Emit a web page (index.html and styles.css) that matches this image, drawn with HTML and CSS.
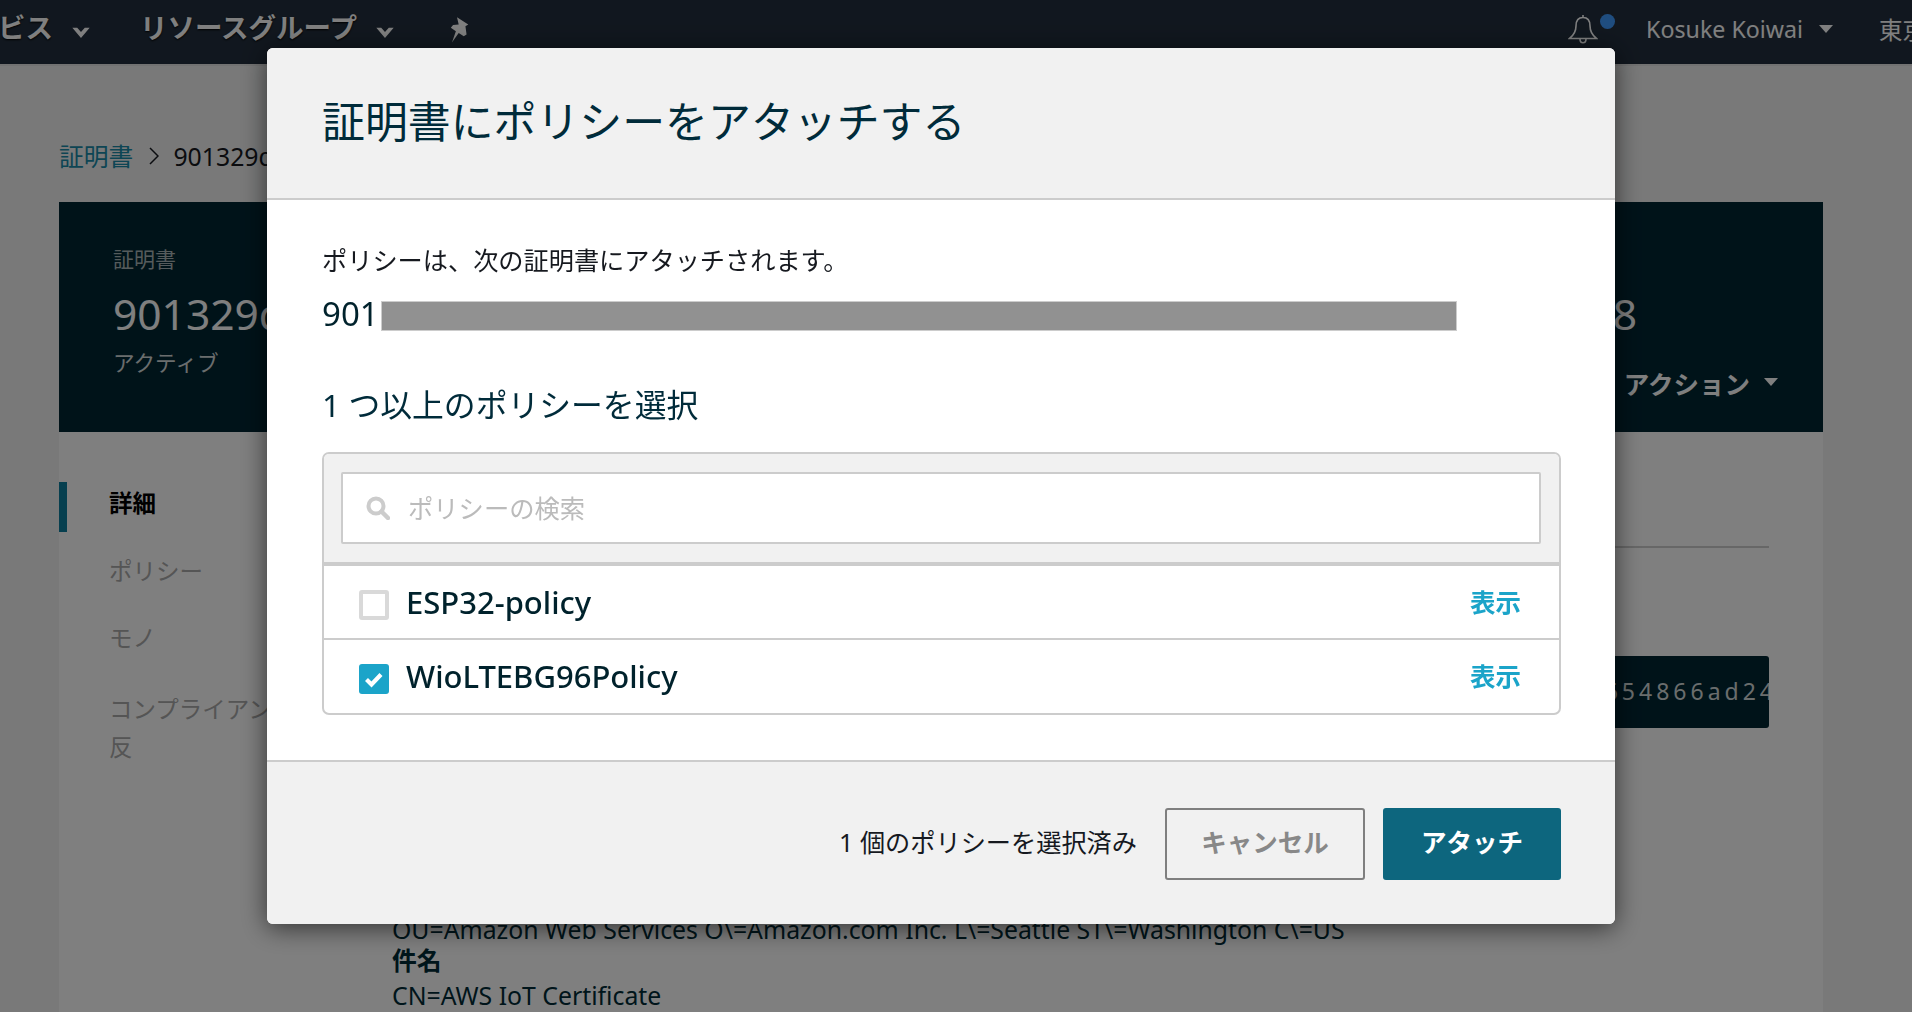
FILE: index.html
```html
<!DOCTYPE html>
<html lang="ja">
<head>
<meta charset="utf-8">
<title>証明書にポリシーをアタッチする</title>
<link rel="stylesheet" href="styles.css">
</head>
<body>
<div class="page">
  <header class="topbar">
    <span class="nav-item nav-first">ビス</span>
    <svg class="chev" viewBox="0 0 16 12"><path d="M0 1.500l8 9.500 8-9.500h-4.500L8 5.500 4.500 1.500z"/></svg>
    <span class="nav-item nav-second">リソースグループ</span>
    <svg class="chev" viewBox="0 0 16 12"><path d="M0 1.500l8 9.500 8-9.500h-4.500L8 5.500 4.500 1.500z"/></svg>
    <svg class="pin" viewBox="0 0 24 24"><path d="M8 1l10 6.500-2.500 1.500 1 7.500-2.500 1.500-4.500-3-6 8.500 3.500-10-4.500-3 2-2.500 5-.5z"/></svg>
    <span class="spacer"></span>
    <svg class="bell" viewBox="0 0 30 30"><path d="M15 1v2.500M15 3.500c-5 0-7 4-7 8.500 0 6-2 9-6.500 12.500h27C24 21 22 18 22 12c0-4.500-2-8.500-7-8.500zM12 25c0 5 6 5 6 0" fill="none" stroke="currentColor" stroke-width="1.600"/></svg>
    <span class="dot"></span>
    <span class="user">Kosuke Koiwai</span>
    <span class="caret"></span>
    <span class="region">東京</span>
  </header>
  <main class="main">
    <nav class="crumbs"><a class="crumb-link">証明書</a><svg class="crumb-sep" viewBox="0 0 10 18"><path d="M1 1l8 8-8 8" fill="none" stroke="currentColor" stroke-width="1.500"/></svg><span>901329d</span></nav>
    <section class="panel">
      <div class="hero">
        <div class="hero-main">
          <div class="hero-label">証明書</div>
          <div class="hero-id"><span>901329d</span><span>8</span></div>
          <div class="hero-status">アクティブ</div>
        </div>
        <div class="hero-action">アクション<span class="caret action-caret"></span></div>
      </div>
      <div class="panel-body">
        <ul class="side">
          <li class="side-item active">詳細</li>
          <li class="side-item">ポリシー</li>
          <li class="side-item">モノ</li>
          <li class="side-item side-wrap">コンプライアンス違反</li>
        </ul>
        <div class="content">
          <div class="rule"></div>
          <div class="hash"><span>654866ad24</span></div>
          <p class="info info-first">OU=Amazon Web Services O\=Amazon.com Inc. L\=Seattle ST\=Washington C\=US</p>
          <p class="info info-head">件名</p>
          <p class="info">CN=AWS IoT Certificate</p>
        </div>
      </div>
    </section>
  </main>
</div>
<div class="overlay"></div>
<div class="modal">
  <div class="modal-head"><h1 class="modal-title">証明書にポリシーをアタッチする</h1></div>
  <div class="modal-body">
    <p class="intro">ポリシーは、次の証明書にアタッチされます。</p>
    <div class="cert"><span class="cert-id">901</span><span class="redact"></span></div>
    <h2 class="pick">1 つ以上のポリシーを選択</h2>
    <div class="box">
      <div class="box-head">
        <div class="search">
          <svg class="search-icon" viewBox="0 0 24 24"><circle cx="10" cy="10" r="7.500" fill="none" stroke="currentColor" stroke-width="4"/><path d="M15.500 15.500L22 22" stroke="currentColor" stroke-width="4.500" stroke-linecap="round"/></svg>
          <span class="placeholder">ポリシーの検索</span>
        </div>
      </div>
      <div class="row row-line">
        <span class="check"></span>
        <span class="policy">ESP32-policy</span>
        <a class="show">表示</a>
      </div>
      <div class="row">
        <span class="check checked"><svg viewBox="0 0 30 30"><path d="M7.500 15.500l5 5 9.500-10" fill="none" stroke="#fff" stroke-width="4.200"/></svg></span>
        <span class="policy">WioLTEBG96Policy</span>
        <a class="show">表示</a>
      </div>
    </div>
  </div>
  <div class="modal-foot">
    <span class="count">1 個のポリシーを選択済み</span>
    <button class="btn btn-cancel">キャンセル</button>
    <button class="btn btn-attach">アタッチ</button>
  </div>
</div>
</body>
</html>
```
FILE: styles.css
```css
* { box-sizing: border-box; }
html, body { margin: 0; height: 1012px; overflow: hidden; }
body {
  font-family: "Noto Sans", "Noto Sans CJK JP", sans-serif;
  background: #f2f3f3;
  color: #16191f;
}
p, h1, h2, ul { margin: 0; padding: 0; font-weight: 400; }

.page { height: 1012px; overflow: hidden; display: flex; flex-direction: column; }

.topbar {
  flex: none;
  height: 66px;
  padding-bottom: 6px;
  border-bottom: 2px solid #e5e5e5;
  background: #232f3e;
  color: #fff;
  display: flex;
  align-items: center;
  white-space: nowrap;
  overflow: hidden;
}
.nav-item { font-size: 27.500px; font-weight: 700; text-shadow: 0 1px 2px #000; margin-top: -6px; }
.nav-first { margin-left: -2px; }
.nav-second { margin-left: 50px; }
.chev { width: 18px; height: 13px; fill: #fff; margin-left: 19px; margin-top: 6px; flex: none; }
.pin { width: 27px; height: 27px; fill: #fff; margin-left: 54px; flex: none; }
.spacer { flex: 1; }
.bell { width: 30px; height: 30px; margin-top: 0; flex: none; }
.dot { width: 15px; height: 15px; border-radius: 50%; background: #3f9bff; align-self: flex-start; margin-top: 14px; margin-left: 2px; flex: none; }
.user { font-size: 23.200px; margin-left: 31px; }
.caret { display: inline-block; width: 0; height: 0; border: 7px solid transparent; border-top: 8px solid #fff; border-bottom: 0; margin-left: 16px; }
.region { font-size: 23.500px; margin-left: 46px; margin-right: -14px; }

.main { flex: 1; padding: 0 89px 0 59px; min-height: 0; display: flex; flex-direction: column; }
.crumbs { height: 136px; flex: none; display: flex; align-items: center; font-size: 24.800px; padding-top: 90px; padding-bottom: 46px; line-height: 0; }
.crumb-link { color: #1a8ba8; }
.crumb-sep { width: 10px; height: 18px; margin: 0 14px 0 16px; }

.panel { flex: 1; background: #fff; display: flex; flex-direction: column; }
.hero { flex: none; height: 230px; background: #002633; color: #fff; display: flex; justify-content: space-between; padding: 0 45px 0 54px; position: relative; }
.hero-main { padding-top: 43px; width: 1524px; flex: none; }
.hero-label { font-size: 21px; line-height: 28px; color: #aab7b8; }
.hero-id { font-size: 42.500px; line-height: 58px; margin-top: 12px; white-space: nowrap; color: #fff; display: flex; justify-content: space-between; }
.hero-status { font-size: 21.600px; line-height: 28px; margin-top: 6px; color: #d5dbdb; }
.hero-action { position: absolute; right: 45px; top: 167px; font-size: 25.500px; line-height: 30px; font-weight: 700; color: #fff; white-space: nowrap; display: flex; align-items: center; }
.action-caret { margin-left: 14px; margin-top: -4px; }

.panel-body { flex: 1; display: flex; min-height: 0; }
.side { list-style: none; flex: none; width: 334px; padding-top: 50px; }
.side-item { font-size: 23.500px; line-height: 39px; padding-left: 50px; color: #aaa; margin-bottom: 28px; white-space: nowrap; }
.side-item.active { color: #000; font-weight: 700; border-left: 8px solid #0d7f9f; padding-left: 42px; height: 50px; line-height: 42px; margin-bottom: 20px; }
.side-wrap { width: 274px; white-space: normal; padding-top: 4px; line-height: 38px; }

.content { flex: 1; min-width: 0; padding-right: 54px; }
.rule { height: 2px; background: #cfcfcf; margin-top: 114px; }
.hash { height: 72px; margin-top: 108px; background: #002633; color: #d5dbdb; border-radius: 3px; display: flex; align-items: center; justify-content: flex-end; overflow: hidden; font-size: 23px; letter-spacing: 4px; white-space: nowrap; padding-bottom: 2px; }
.hash span { flex: none; margin-right: -8px; }
.info { font-size: 24.800px; line-height: 33px; color: #002b36; white-space: nowrap; margin-left: -1px; }
.info-first { margin-top: 185px; }
.info-head { font-weight: 700; margin-top: -2px; margin-bottom: 2px; }

.overlay { position: fixed; inset: 0; background: rgba(0, 0, 0, .5); }

.modal {
  position: fixed;
  left: 267px;
  top: 48px;
  width: 1348px;
  height: 876px;
  background: #fff;
  border-radius: 6px;
  box-shadow: 0 4px 26px rgba(0, 0, 0, .6);
  display: flex;
  flex-direction: column;
  overflow: hidden;
  color: #00222c;
}
.modal-head { flex: none; height: 152px; background: #f1f1f1; border-bottom: 2px solid #ccc; display: flex; align-items: center; padding: 0 55px 2px; }
.modal-title { font-size: 42.900px; line-height: 60px; color: #002b3a; }
.modal-body { flex: none; height: 560px; padding: 45px 54px 0 55px; }
.intro { font-size: 25.200px; line-height: 30px; color: #16191f; white-space: nowrap; }
.cert { display: flex; align-items: center; height: 30px; margin-top: 26px; gap: 2px; }
.cert-id { font-size: 33px; line-height: 30px; margin-top: -4px; }
.redact { width: 1076px; height: 30px; background: #919191; border: 1px solid #ccc; flex: none; }
.pick { font-size: 31.800px; line-height: 40px; margin-top: 54px; color: #002b3a; }
.box { margin-top: 27px; height: 263px; border: 2px solid #ccc; border-radius: 7px; overflow: hidden; }
.box-head { background: #f1f1f1; height: 112px; border-bottom: 4px solid #ccc; padding: 18px 18px 17px 17px; }
.search { height: 72px; background: #fff; border: 2px solid #ccc; border-radius: 2px; display: flex; align-items: center; padding-left: 23px; }
.search-icon { width: 24px; height: 24px; color: #ccc; flex: none; }
.placeholder { font-size: 25.300px; color: #bbb; margin-left: 18px; margin-top: -2px; }
.row { height: 72px; display: flex; align-items: center; padding: 0 38px 0 35px; }
.row-line { height: 74px; border-bottom: 2px solid #ccc; }
.check { width: 30px; height: 30px; flex: none; border: 4px solid #d9d9d9; border-radius: 3px; background: #fff; margin-top: 6px; }
.check.checked { border: 0; background: #1ba4c9; }
.check svg { display: block; width: 30px; height: 30px; }
.policy { font-size: 31px; font-weight: 500; margin-left: 17px; flex: 1; line-height: 40px; }
.show { font-size: 25.500px; font-weight: 700; color: #1ba4c9; margin-top: -3px; }
.modal-foot { flex: 1; background: #f1f1f1; border-top: 2px solid #ccc; display: flex; align-items: center; justify-content: flex-end; padding: 2px 54px 0 0; }
.count { font-size: 25.200px; color: #16191f; margin-right: 28px; margin-top: -6px; white-space: nowrap; }
.btn { font-family: inherit; font-size: 25.500px; font-weight: 700; height: 72px; border-radius: 3px; padding: 0 0 8px; }
.btn-cancel { width: 200px; background: transparent; border: 2px solid #7f7f7f; color: #888; }
.btn-attach { width: 178px; margin-left: 18px; background: #0d667e; border: 0; color: #fff; }
```
